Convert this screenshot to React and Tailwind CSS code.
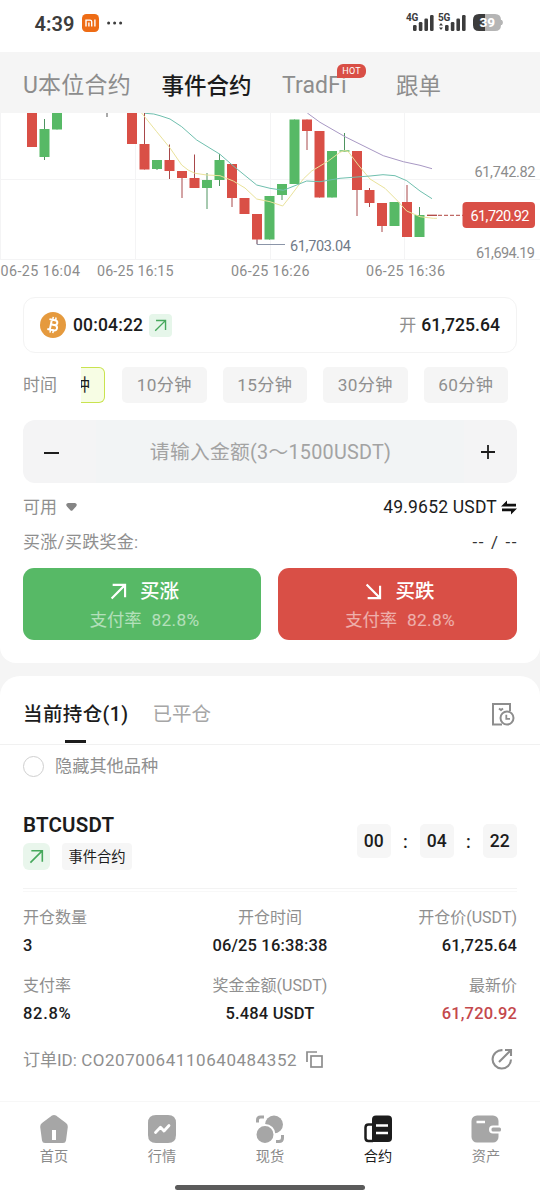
import React from "react";

const RED = "#d94f46";
const GREEN = "#57b966";

// x, body top, body bottom, wick top, wick bottom, rising
const candles = [
  [27, 113, 147, 113, 147, 0],
  [39.5, 129, 157, 119, 160, 1],
  [52, 113, 129.5, 113, 129.5, 1],
  [127, 113, 144, 113, 144, 0],
  [139.5, 144, 169.5, 113, 169.5, 0],
  [152, 160, 169, 160, 170, 1],
  [164.5, 160, 171, 144.5, 179, 0],
  [177, 171, 178, 171, 198, 0],
  [189.5, 178, 188, 154.5, 188, 0],
  [202, 180, 188, 173, 209, 1],
  [214.5, 160, 180, 154, 186, 1],
  [227, 164, 198, 164, 207, 0],
  [239.5, 198, 214, 198, 214, 0],
  [252, 214, 239.5, 214, 244, 0],
  [264.5, 196, 239.5, 196, 239.5, 1],
  [277, 184, 195, 184, 200, 1],
  [289.5, 119.5, 184, 119.5, 184, 1],
  [302, 119.5, 131, 119.5, 150, 0],
  [314.5, 131, 197.5, 131, 197.5, 0],
  [327, 151, 197.5, 151, 197.5, 1],
  [339.5, 150.3, 151.7, 133, 151, 1],
  [352, 151, 190, 151, 216, 0],
  [364.5, 190, 203, 188, 207, 0],
  [377, 203, 226, 203, 232, 0],
  [389.5, 202, 226, 202, 226, 1],
  [402, 202, 237, 185, 237, 0],
  [414.5, 215, 237, 207, 237, 1],
];

function Chart() {
  return (
    <svg
      className="block h-[172px] w-[540px] shrink-0 bg-white"
      viewBox="0 113 540 172"
      fontFamily="Roboto, 'Noto Sans', sans-serif"
      fontSize="14.5"
      fill="#8c8c8c"
    >
      <path d="M0 179.5H540M0 259.5H540M.5 113V259M135.5 113V259M270.5 113V259M404.5 113V259" stroke="#f4f4f5" fill="none" />
      <path d="M107 113V117" stroke="#555" fill="none" />
      {candles.map(([x, t, b, wt, wb, up]) => (
        <g key={x}>
          <path d={`M${x + 5} ${wt}V${wb}`} stroke={up ? "#4e9460" : "#a8484a"} strokeWidth="1" />
          <rect x={x} y={t} width="10" height={b - t} fill={up ? GREEN : RED} />
        </g>
      ))}
      <g fill="none" strokeWidth="1" strokeLinejoin="round">
        <path
          stroke="#e9e29a"
          d="M141.6 113L156.7 131.7L170 148L181.7 165Q188 171 195 173.3L206.7 175L220 175.7L233.3 181L245 188L256.7 199L270 201.7L282.7 206L290 196.7L303.3 179L311.7 171L328.3 161L340 152.3Q345 149 348.3 151.7L358.3 165L370 179L385 188.3L396.7 200L406.7 211L420 216.7L433.3 218.3H437"
        />
        <path
          stroke="#6fbfae"
          d="M145 113.3Q155 113.5 160 115.7L170 119L181.7 126.7L196.7 140L220 154.3L233 165.7L256.7 185L270 188.3L283.3 190.3L306.7 181L320 181.7L340 178.3L370 176L383 174.7L395 175.7L406.7 180.7L420 191L432 198.7"
        />
        <path stroke="#a898c4" d="M307.3 113L320 122.3L345 136.7L383.3 155.7L403.3 161.7L420 165.3L432 168.7" />
        <path stroke="#8b95a8" d="M257 240V244.5H285" />
        <path stroke="#b0443f" strokeWidth="1.3" d="M427 215.3H437" />
        <path stroke="#b0443f" strokeDasharray="4 2" d="M438 215.3H463" />
      </g>
      <text x="290" y="250.5" textLength="61" fill="#707a88">61,703.04</text>
      <text x="474.5" y="177" textLength="61">61,742.82</text>
      <text x="476" y="257.5" textLength="59">61,694.19</text>
      <rect x="462.5" y="202" width="72.5" height="26" rx="4" fill={RED} />
      <text x="470.5" y="220.5" textLength="59" fill="#fff">61,720.92</text>
      <g fontSize="14.3">
        <text x="0.5" y="276" textLength="79.5">06-25 16:04</text>
        <text x="97" y="276" textLength="76.5">06-25 16:15</text>
        <text x="231" y="276" textLength="78.5">06-25 16:26</text>
        <text x="366" y="276" textLength="79">06-25 16:36</text>
      </g>
    </svg>
  );
}

function Signal() {
  return (
    <svg className="h-[17px] w-[21px]" viewBox="0 0 21 17" fill="#3c3c3c">
      <rect x="0" y="11" width="3.6" height="6" rx="1.2" />
      <rect x="5.8" y="8" width="3.6" height="9" rx="1.2" />
      <rect x="11.4" y="4.5" width="3.6" height="12.5" rx="1.2" />
      <rect x="17" y="1" width="3.6" height="16" rx="1.2" />
    </svg>
  );
}

function StatusBar() {
  return (
    <div className="flex h-[52px] shrink-0 items-start bg-white pr-[36px] pl-[34.5px] text-[#3c3c3c]">
      <div className="mt-[14px] w-[40.5px] text-[20px] leading-[20px] font-semibold tracking-[0.1px]">4:39</div>
      <svg className="mt-[14px] ml-[7px] h-[18px] w-[17px]" viewBox="0 0 17 18">
        <rect width="17" height="18" rx="4.5" fill="#ee6c15" />
        <path d="M4 12.4V6.1H8Q9.7 6.1 9.7 7.8V12.4M6.9 8.6V12.4M12.9 5.6V12.4" stroke="#fff" strokeWidth="1.4" fill="none" />
      </svg>
      <svg className="mt-[21px] ml-2 h-1 w-4" viewBox="0 0 16 4" fill="#3c3c3c">
        <circle cx="1.6" cy="2" r="1.5" />
        <circle cx="7.6" cy="2" r="1.5" />
        <circle cx="13.6" cy="2" r="1.5" />
      </svg>
      <div className="grow" />
      <div className="mt-[14px] flex h-[17px]">
        <span className="mt-[-1px] -mr-[7px] w-[14px] text-[10px] leading-[9px] font-bold tracking-[-0.2px]">4G</span>
        <Signal />
      </div>
      <div className="mt-[14px] ml-[4px] flex h-[17px]">
        <span className="mt-[-1px] -mr-[7px] w-[14px] text-[10px] leading-[9px] font-bold tracking-[-0.2px]">
          5G
          <svg className="mt-[1px] ml-[1px] h-[7px] w-[4px]" viewBox="0 0 4 7" fill="#3c3c3c">
            <path d="M2 0L4 2.6H0ZM2 7L0 4.4H4Z" />
          </svg>
        </span>
        <Signal />
      </div>
      <svg className="mt-[14px] ml-[7px] h-[17px] w-[31px]" viewBox="0 0 31 17" fontFamily="Roboto" fontWeight="800">
        <path d="M6 0H12V17H6Q0 17 0 11V6Q0 0 6 0Z" fill="#3c3c3c" />
        <path d="M12 0H22Q28 0 28 6V11Q28 17 22 17H12Z" fill="#b5b5b5" />
        <path d="M28.5 6Q30.5 8.5 28.5 11Z" fill="#b5b5b5" stroke="#b5b5b5" />
        <text x="6.5" y="13.3" fontSize="13.5" fill="#fff" textLength="15.5">39</text>
      </svg>
    </div>
  );
}

function ArrowUp({ className, width = 1.8 }) {
  return (
    <svg className={className} viewBox="0 0 16 16" fill="none" stroke="currentColor" strokeWidth={width}>
      <path d="M1.5 14.5L14 2M2.5 1.8H14.2V13.5" />
    </svg>
  );
}

function Bitcoin() {
  return (
    <svg className="h-[26px] w-[26px]" viewBox="0 0 26 26">
      <circle cx="13" cy="13" r="13" fill="#e59a3e" />
      <g transform="rotate(12 13 13)" fill="none" stroke="#fff" strokeWidth="2">
        <path d="M8.3 8H14Q16.8 8 16.8 10.4T14 12.8H10.8M10.8 12.8H14.6Q17.6 12.8 17.6 15.5T14.6 18.1H8.3M10.8 8V18" />
        <path d="M11.6 5V8M14.5 5V8M11.6 18V21M14.5 18V21" strokeWidth="1.5" />
      </g>
    </svg>
  );
}

function Chip({ children }) {
  return (
    <div className="flex h-9 w-[84.5px] shrink-0 items-center justify-center rounded-[5px] bg-[#f5f5f5] pt-[2px] text-[17.2px] leading-none tracking-[0.3px] text-[#8f8f8f]">
      {children}
    </div>
  );
}

function TradeButton({ down, label, className }) {
  return (
    <div className={className}>
      <div className="flex h-[30px] items-center text-[19.5px] leading-none font-medium text-white">
        <ArrowUp className={down ? "mr-[13px] h-[17px] w-[17px] rotate-90" : "mr-[13px] h-[17px] w-[17px]"} width={2} />
        <span className="pt-[1px]">{label}</span>
      </div>
      <div className="mt-[3px] flex h-6 items-center gap-[10px] text-[17.3px] leading-none text-white/55">
        <span>支付率</span>
        <span className="tracking-[0.3px]">82.8%</span>
      </div>
    </div>
  );
}

function Cell({ label, value, align, red }) {
  return (
    <div className={align}>
      <div className="flex h-[28px] items-center pt-[2px] text-[16px] leading-none text-[#8f8f8f]">{label}</div>
      <div className={red ? "flex h-[28px] items-center pt-[2px] text-[16.5px] leading-none font-medium tracking-[0.15px] text-[#c4484c]" : "flex h-[28px] items-center pt-[2px] text-[16.5px] leading-none font-medium tracking-[0.15px] text-[#1c1c1c]"}>
        {value}
      </div>
    </div>
  );
}

function Timer({ children }) {
  return (
    <span className="flex h-[34px] w-[34.5px] items-center justify-center rounded-[5px] bg-[#f6f6f6] pt-[1px] text-[17.5px] leading-none font-medium">
      {children}
    </span>
  );
}

function NavItem({ label, active, children }) {
  return (
    <div className={active ? "flex w-[108px] flex-col items-center text-[#1c1c1c]" : "flex w-[108px] flex-col items-center text-[#8a8a8a]"}>
      <svg className={active ? "h-[30px] w-[30px] text-[#1c1c1c]" : "h-[30px] w-[30px] text-[#a6a6a6]"} viewBox="0 0 30 30" fill="currentColor">
        {children}
      </svg>
      <span className="mt-[4px] text-[14.2px] leading-[16px]">{label}</span>
    </div>
  );
}

export default function App() {
  return (
    <div className="flex h-[1200px] w-[540px] flex-col overflow-hidden bg-[#f5f5f5] font-[Roboto,'Noto_Sans_CJK_SC',sans-serif]">
      <StatusBar />
      <div className="flex h-[61px] shrink-0 items-center bg-[#f5f5f5] pt-[7px] pl-[23px] text-[22.5px] leading-[30px] whitespace-nowrap text-[#8d8d8d]">
        <span className="w-[138.5px] text-[23px] tracking-[0.2px]">U本位合约</span>
        <span className="w-[120.5px] font-medium text-[#1c1c1c]">事件合约</span>
        <span className="relative w-[114px] text-[23px] tracking-[0.1px]">
          TradFi
          <span className="absolute top-[-7px] left-[55px] flex h-[14px] w-[29px] items-center justify-center rounded-[6px] rounded-bl-none bg-[#d94f46] text-[9px] leading-none tracking-[0.2px] text-white">
            HOT
          </span>
        </span>
        <span>跟单</span>
      </div>

      <section className="flex h-[550px] shrink-0 flex-col rounded-b-[16px] bg-white">
        <Chart />
        <div className="mx-[23px] mt-[12px] flex h-[56px] shrink-0 items-center rounded-[12px] border border-[#f3f3f3] pr-4 pl-4 leading-none">
          <Bitcoin />
          <span className="ml-[7px] w-[70px] pt-[1px] text-[17.5px] font-medium tracking-[0.15px] text-[#1c1c1c]">00:04:22</span>
          <span className="ml-[6px] flex h-[23px] w-[23px] items-center justify-center rounded bg-[#e6f6ea] text-[#46a85c]">
            <ArrowUp className="h-[13px] w-[13px]" width={1.7} />
          </span>
          <span className="ml-auto pt-[1px] text-[17px] text-[#8f8f8f]">开</span>
          <span className="ml-[5px] pt-[1px] text-[17.6px] font-medium text-[#1c1c1c]">61,725.64</span>
        </div>

        <div className="mt-[14px] flex h-9 shrink-0 items-center pl-[23px]">
          <span className="w-[58px] pt-[1px] text-[17px] leading-none text-[#8f8f8f]">时间</span>
          <div className="flex h-9 w-6 items-center justify-start overflow-hidden rounded-r-[6px] border border-l-0 border-[#c9e34f] bg-[#f7fde4] text-[17px] leading-none text-[#1c1c1c]">
            <span className="-ml-[8px]">钟</span>
          </div>
          <div className="ml-[17px] flex gap-4">
            <Chip>10分钟</Chip>
            <Chip>15分钟</Chip>
            <Chip>30分钟</Chip>
            <Chip>60分钟</Chip>
          </div>
        </div>

        <div className="mx-[23px] mt-[17px] flex h-[63px] shrink-0 overflow-hidden rounded-[12px] bg-[#f4f4f5]">
          <div className="flex w-[73px] items-center pl-[21px]">
            <span className="mt-[2px] h-[2px] w-[15px] bg-[#1c1c1c]" />
          </div>
          <div className="flex w-[368px] items-center justify-center bg-[#f2f4f5] pt-[2px] pr-[19px] text-[19.8px] leading-none tracking-[0.25px] whitespace-nowrap text-[#a3a3a3]">
            请输入金额(3～1500USDT)
          </div>
          <div className="flex grow items-center pl-[17px]">
            <svg className="mt-[1px] h-[14px] w-[14px]" viewBox="0 0 14 14" stroke="#1c1c1c" strokeWidth="1.8">
              <path d="M0 7H14M7 0V14" />
            </svg>
          </div>
        </div>

        <div className="mx-[23px] mt-[7px] flex h-[34px] shrink-0 items-center text-[17px] leading-none text-[#8f8f8f]">
          <span className="pt-[1px]">可用</span>
          <svg className="ml-[9px] h-[8px] w-[11px]" viewBox="0 0 11 8" fill="#858585">
            <path d="M2 0H9Q12 1 10 3.5L6.6 7.3Q5.5 8.4 4.4 7.3L1 3.5Q-1 1 2 0Z" />
          </svg>
          <span className="ml-auto pt-[2px] text-[17.5px] tracking-[0.2px] text-[#1c1c1c]">49.9652 USDT</span>
          <svg className="ml-[4px] h-[15px] w-[16px]" viewBox="0 0 16 15" fill="#111">
            <path d="M0 6.500L6 0.500V3.700H15V6.500ZM16 8.500L10 14.500V11.300H1V8.500Z" />
          </svg>
        </div>
        <div className="mx-[23px] flex h-[36px] shrink-0 items-center justify-between text-[17px] leading-none text-[#8f8f8f]">
          <span className="pt-[1px] tracking-[0.3px]">买涨/买跌奖金:</span>
          <span className="-mr-[1px] tracking-[1.6px] text-[#333]">-- / --</span>
        </div>

        <div className="mx-[23px] mt-[8px] flex shrink-0 justify-between">
          <TradeButton label="买涨" className="flex h-[72px] w-[238px] flex-col items-center rounded-[11px] bg-[#57b966] pt-[8px] pl-[5px]" />
          <TradeButton down label="买跌" className="flex h-[72px] w-[239px] flex-col items-center rounded-[11px] bg-[#d94f46] pt-[8px] pl-[5px]" />
        </div>
      </section>

      <section className="mt-[13px] flex h-[425px] shrink-0 flex-col rounded-t-[20px] bg-white">
        <div className="flex h-[69px] shrink-0 items-center border-b border-[#f1f1f1] pt-[7px] pr-[25px] pl-[23px] leading-none">
          <div className="relative pt-[2px] text-[19.5px] font-medium tracking-[0.4px] text-[#1c1c1c]">
            当前持仓(1)
            <span className="absolute top-[37px] left-[42px] h-[3px] w-[21px] bg-[#1c1c1c]" />
          </div>
          <span className="ml-6 pt-[2px] text-[19.5px] text-[#a6a6a6]">已平仓</span>
          <svg className="ml-auto h-[24px] w-[24px]" viewBox="0 0 24 24" fill="none" stroke="#8d8d8d" strokeWidth="2">
            <path d="M11 22.5H2V2H19V9M8 6.5L10 8L12 6.5" />
            <circle cx="16" cy="16" r="6.5" />
            <path d="M15.3 12.8V16.8H19" strokeWidth="1.8" />
          </svg>
        </div>

        <div className="flex h-[43px] shrink-0 items-center pl-[23px] text-[17.2px] leading-none text-[#8f8f8f]">
          <span className="mr-[11px] h-[21px] w-[21px] rounded-full border-[1.5px] border-[#cfcfcf]" />
          <span className="pt-[1px]">隐藏其他品种</span>
        </div>

        <div className="mx-[23px] mt-[24px] flex h-[77px] shrink-0 justify-between border-b border-[#f3f3f3] leading-none text-[#1c1c1c]">
          <div>
            <div className="flex h-[26px] items-center text-[20.5px] font-semibold tracking-[0.2px]">BTCUSDT</div>
            <div className="mt-[5px] flex h-[27px] gap-3">
              <span className="flex w-[27px] items-center justify-center rounded-[6px] bg-[#e9f6ec] text-[#46a85c]">
                <ArrowUp className="h-[15px] w-[15px]" width={1.7} />
              </span>
              <span className="flex w-[70px] items-center justify-center rounded bg-[#f6f6f6] pt-[2px] text-[14.3px]">事件合约</span>
            </div>
          </div>
          <div className="mt-[12px] flex h-[34px] items-center text-[18px] font-medium">
            <Timer>00</Timer>
            <span className="w-[28.5px] pt-[2px] text-center">:</span>
            <Timer>04</Timer>
            <span className="w-[28.5px] pt-[2px] text-center">:</span>
            <Timer>22</Timer>
          </div>
        </div>

        <div className="mx-[23px] mt-[2px] grid shrink-0 grid-cols-3 gap-y-[12px] border-t border-[#f8f8f8] pt-[11px]">
          <Cell label="开仓数量" value="3" align="flex flex-col items-start" />
          <Cell label="开仓时间" value="06/25 16:38:38" align="flex flex-col items-center" />
          <Cell label="开仓价(USDT)" value="61,725.64" align="flex flex-col items-end" />
          <Cell label="支付率" value={<span className="tracking-[0.7px]">82.8%</span>} align="flex flex-col items-start" />
          <Cell label="奖金金额(USDT)" value="5.484 USDT" align="flex flex-col items-center" />
          <Cell label="最新价" value="61,720.92" align="flex flex-col items-end" red />
        </div>

        <div className="mx-[23px] mt-[15px] flex h-[34px] shrink-0 items-center text-[17px] leading-none text-[#8f8f8f]">
          <span className="pt-[2px]">
            订单ID: <span className="tracking-[0.56px]">CO2070064110640484352</span>
          </span>
          <svg className="ml-[9px] h-[17px] w-[17px]" viewBox="0 0 17 17" fill="none" stroke="#8d8d8d" strokeWidth="1.7">
            <path d="M1 11V1H11" />
            <rect x="5" y="5" width="11" height="11" />
          </svg>
          <svg className="mr-[4px] ml-auto h-[22px] w-[22px]" viewBox="0 0 22 22" fill="none" stroke="#8d8d8d" strokeWidth="2.1">
            <path d="M11.5 2.2A9.2 9.2 0 1 0 20 11.5M8 14L19 3M14 2H20V8" />
          </svg>
        </div>
      </section>

      <nav className="flex h-[99px] shrink-0 flex-col border-t border-[#f7f7f7] bg-white">
        <div className="flex h-[82.5px] pt-[12px]">
          <NavItem label="首页">
            <path fillRule="evenodd" d="M13 1.6Q15 .2 17 1.6L27 9Q29 10.6 28.8 13L27 26.5Q26.6 29 24 29H6Q3.4 29 3 26.500L1.2 13Q1 10.600 3 9ZM13 16V26H17V16Z" />
          </NavItem>
          <NavItem label="行情">
            <path fillRule="evenodd" d="M9 1H21Q29 1 29 9V21Q29 29 21 29H9Q1 29 1 21V9Q1 1 9 1Z" />
            <path d="M8.500 18.500L13.500 13.200L17 17L22 11.500" fill="none" stroke="#fff" strokeWidth="2.8" strokeLinecap="round" strokeLinejoin="round" />
          </NavItem>
          <NavItem label="现货">
            <circle cx="19" cy="10.500" r="9" />
            <circle cx="10" cy="20.500" r="9.500" stroke="#fff" strokeWidth="2" />
            <path d="M2.500 8.500V6Q2.500 3 5.500 3H9M27.500 21V24Q27.500 27.500 24 27.500H21" fill="none" stroke="currentColor" strokeWidth="3" />
          </NavItem>
          <NavItem label="合约" active>
            <path d="M13 1.500H25Q29 1.500 29 5.500V24Q29 28 25 28H9V5.500Q9 1.500 13 1.500Z" />
            <path d="M10 10.500H5.500Q2.500 10.500 2.500 13.500V24Q2.500 27 5.500 27H10" fill="none" stroke="currentColor" strokeWidth="2.500" />
            <path d="M13 11.500H25M13 19H25" stroke="#fff" strokeWidth="2.500" />
          </NavItem>
          <NavItem label="资产">
            <rect x="0.500" y="1.500" width="27" height="27" rx="5.500" />
            <rect x="18" y="11.500" width="13" height="8" rx="4" fill="#fff" />
            <rect x="20.500" y="13.500" width="9.500" height="4" rx="1.500" />
            <path d="M5.500 8H14" stroke="#fff" strokeWidth="2.500" />
          </NavItem>
        </div>
        <div className="ml-[175px] h-[5.5px] w-[190px] rounded-full bg-[#5b5b5b]" />
      </nav>
    </div>
  );
}
